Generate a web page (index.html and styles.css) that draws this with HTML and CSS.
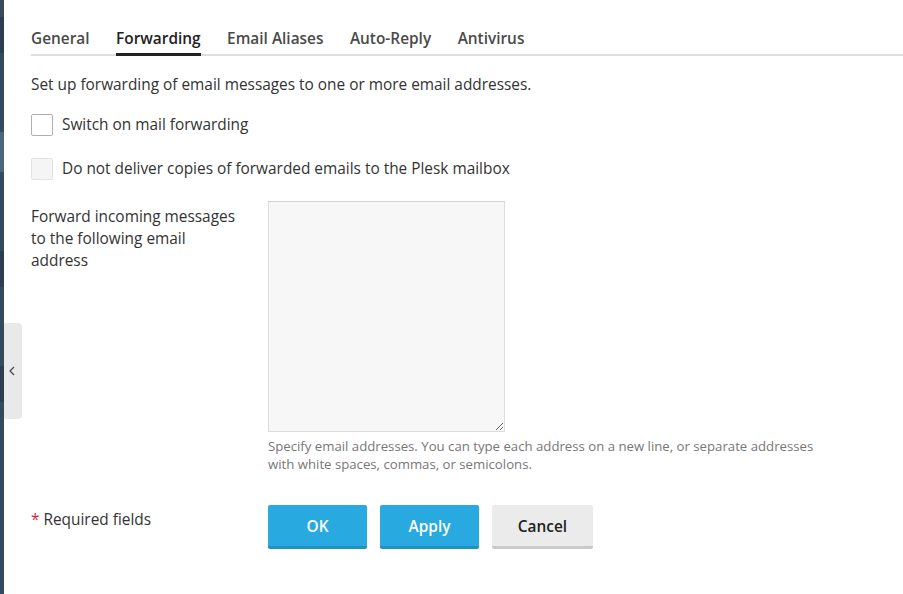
FILE: index.html
```html
<!DOCTYPE html>
<html>
<head>
<meta charset="utf-8">
<link rel="stylesheet" href="styles.css">
</head>
<body>
<div class="page">
  <div class="rail">
    <span class="seg s1"></span>
    <span class="seg s2"></span>
    <span class="seg s3"></span>
    <span class="seg s4"></span>
    <span class="seg s3b"></span>
    <span class="seg s2b"></span>
    <span class="seg s3c"></span>
    <span class="seg s2c"></span>
    <span class="seg s3d"></span>
  </div>
  <button class="collapse" type="button" aria-label="Collapse">
    <svg width="6" height="10" viewBox="0 0 6 10"><path d="M5 1 L1 5 L5 9" fill="none" stroke="#444" stroke-width="1.2"/></svg>
  </button>
  <main class="main">
    <nav class="tabs">
      <a class="tab">General</a>
      <a class="tab active">Forwarding</a>
      <a class="tab">Email Aliases</a>
      <a class="tab">Auto-Reply</a>
      <a class="tab">Antivirus</a>
    </nav>
    <p class="intro">Set up forwarding of email messages to one or more email addresses.</p>
    <label class="check">
      <span class="box"></span>
      <span>Switch on mail forwarding</span>
    </label>
    <label class="check disabled">
      <span class="box"></span>
      <span>Do not deliver copies of forwarded emails to the Plesk mailbox</span>
    </label>
    <div class="field">
      <div class="field-label">Forward incoming messages to the following email address</div>
      <div class="field-value">
        <textarea class="area" disabled></textarea>
        <div class="hint">Specify email addresses. You can type each address on a new line, or separate addresses with white spaces, commas, or semicolons.</div>
      </div>
    </div>
    <div class="actions">
      <div class="required"><span class="star">*</span> Required fields</div>
      <div class="buttons">
        <button class="btn primary" type="button">OK</button>
        <button class="btn primary" type="button">Apply</button>
        <button class="btn secondary" type="button">Cancel</button>
      </div>
    </div>
  </main>
</div>
</body>
</html>
```
FILE: styles.css
```css
* { box-sizing: border-box; }
html, body { margin: 0; padding: 0; background: #fff; }
body {
  font-family: "Open Sans", "Liberation Sans", sans-serif;
  font-size: 15.4px;
  color: #222;
  line-height: 22px;
}
.page {
  display: flex;
  min-height: 594px;
  position: relative;
}
.rail {
  width: 4px;
  flex: 0 0 4px;
  display: flex;
  flex-direction: column;
  background: #364a5e;
}
.seg { display: block; width: 4px; }
.s1 { height: 17px; background: #3a4b5c; }
.s2 { height: 36px; background: #2e3e4f; }
.s3 { height: 79px; background: #364a5e; }
.s4 { height: 40px; background: #4d667d; }
.s3b { height: 79px; background: #364a5e; }
.s2b { height: 36px; background: #2e3e4f; }
.s3c { height: 79px; background: #364a5e; }
.s2c { height: 36px; background: #2e3e4f; }
.s3d { flex: 1; background: #364a5e; }

.collapse {
  position: absolute;
  left: 4px;
  top: 323px;
  width: 18px;
  height: 96px;
  border: 0;
  padding: 0;
  background: #e9e9e9;
  border-radius: 0 4px 4px 0;
  display: flex;
  align-items: center;
  justify-content: center;
}
.collapse svg { margin-left: -2px; }

.main {
  flex: 1;
  padding: 22px 0 0 27px;
}
.tabs {
  display: flex;
  gap: 26.5px;
  border-bottom: 2px solid #dedede;
}
.tab {
  font-size: 15.4px;
  font-weight: 600;
  color: #4a4a4a;
  line-height: 22px;
  padding: 6px 0 3px;
  border-bottom: 3px solid transparent;
  margin-bottom: -2px;
  cursor: pointer;
}
.tab.active {
  color: #222;
  border-bottom-color: #222;
}
.intro {
  margin: 18px 0 0;
  color: #333;
}
.check {
  display: flex;
  align-items: center;
  gap: 9px;
  margin-top: 18px;
  color: #333;
}
.check + .check { margin-top: 22px; }
.box {
  width: 22px;
  height: 22px;
  border: 1px solid #b0b0b0;
  border-radius: 2px;
  background: #fff;
  flex: 0 0 22px;
}
.check.disabled .box {
  border-color: #e2e2e2;
  background: #f5f5f5;
}
.field {
  display: flex;
  margin-top: 21px;
}
.field-label {
  width: 237px;
  flex: 0 0 237px;
  padding: 5px 26px 0 0;
  line-height: 22px;
  color: #333;
}
.field-value { width: 560px; }
.area {
  display: block;
  width: 237px;
  height: 231px;
  background: #f7f7f7;
  border: 1px solid #dcdcdc;
  border-top-color: #d2d2d2;
  margin: 0;
  resize: both;
  font-family: inherit;
}
.hint {
  margin-top: 5px;
  font-size: 13.2px;
  line-height: 18px;
  color: #777;
}
.actions {
  display: flex;
  margin-top: 32px;
}
.required {
  width: 237px;
  flex: 0 0 237px;
  padding-top: 4px;
  color: #333;
}
.star { color: #d01e3c; }
.buttons {
  display: flex;
  gap: 13px;
}
.btn {
  height: 44px;
  min-width: 99px;
  padding: 2px 20px 0;
  border: 0;
  border-radius: 2px;
  font-family: inherit;
  font-size: 15.4px;
  font-weight: 600;
  cursor: pointer;
}
.btn.primary {
  background: #28a9df;
  color: #fff;
  border-bottom: 3px solid #2191c1;
}
.btn.secondary {
  min-width: 101px;
  background: #ebebeb;
  color: #222;
  font-weight: 600;
  border-bottom: 3px solid #c9c9c9;
}
```
